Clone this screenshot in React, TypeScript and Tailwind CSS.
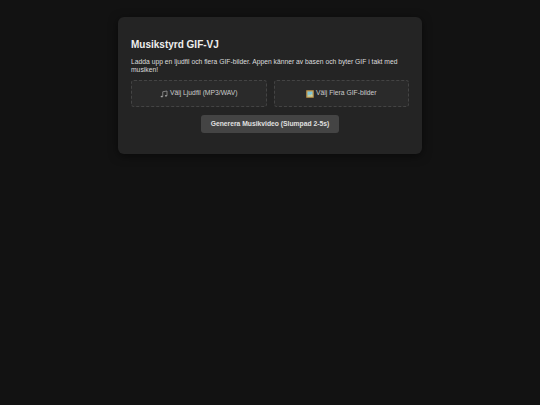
const NoteIcon = () => (
	<svg width="8" height="8" viewBox="0 0 16 16" fill="none" className="shrink-0">
		<path d="M5.5 13V3.5L14 2v9.5" stroke="#a3a3a3" strokeWidth="1.4" />
		<ellipse cx="3.5" cy="13" rx="2.2" ry="1.7" fill="#a3a3a3" />
		<ellipse cx="12" cy="11.5" rx="2.2" ry="1.7" fill="#a3a3a3" />
	</svg>
);

const PictureIcon = () => (
	<svg width="8" height="8" viewBox="0 0 16 16" className="shrink-0">
		<rect x="0.5" y="0.5" width="15" height="15" fill="#c79a4b" />
		<rect x="3" y="3" width="10" height="10" fill="#7fc4d8" />
		<path d="M3 13l3-4 2.5 2L11 8l2 3v2z" fill="#d9d08a" />
	</svg>
);

const App = () => {
	return (
		<div className="min-h-[405px] bg-[#121212] pt-[17px] font-['Liberation_Sans',Arial,sans-serif] text-[#dcdcdc] antialiased">
			<div className="mx-auto w-[304px] rounded-md bg-[#242424] px-[13px] pt-[21px] pb-[21px] shadow-[0_2px_10px_rgba(0,0,0,0.5)]">
				<h1 className="text-[10px] leading-[13px] font-bold text-[#eeeeee]">Musikstyrd GIF-VJ</h1>
				<p className="mt-[7px] text-[6.75px] leading-[8px]">
					Ladda upp en ljudfil och flera GIF-bilder. Appen känner av basen och byter GIF i takt med musiken!
				</p>
				<div className="mt-[6px] flex gap-[7px]">
					<div className="flex h-[27px] flex-1 items-center justify-center gap-[2px] rounded-[3px] border border-dashed border-[#444444] bg-[#2a2a2a] text-[6.75px] text-[#cccccc]">
						<NoteIcon />
						<span>Välj Ljudfil (MP3/WAV)</span>
					</div>
					<div className="flex h-[27px] flex-1 items-center justify-center gap-[2px] rounded-[3px] border border-dashed border-[#444444] bg-[#2a2a2a] text-[6.75px] text-[#cccccc]">
						<PictureIcon />
						<span>Välj Flera GIF-bilder</span>
					</div>
				</div>
				<div className="mt-[8px] flex justify-center">
					<button className="h-[18px] w-[138px] rounded-[3px] bg-[#444444] text-[6.75px] font-bold text-[#e0e0e0]">
						Generera Musikvideo (Slumpad 2-5s)
					</button>
				</div>
			</div>
		</div>
	);
};

export default App;
